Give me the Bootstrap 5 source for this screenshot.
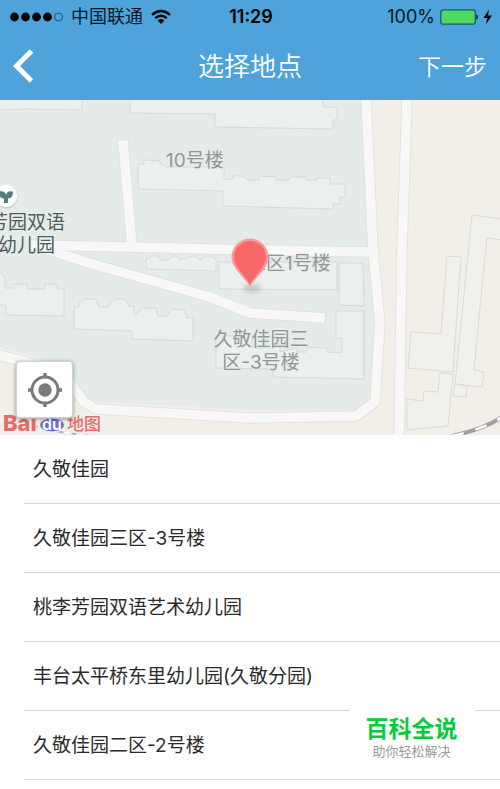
<!DOCTYPE html>
<html lang="zh-CN">
<head>
<meta charset="utf-8">
<meta name="viewport" content="width=device-width, initial-scale=1">
<title>选择地点</title>
<link href="https://cdn.jsdelivr.net/npm/bootstrap@5.3.0/dist/css/bootstrap.min.css" rel="stylesheet">
<style>
body { font-family: Inter, "Noto Sans CJK SC", sans-serif; color: #2b2b2b; background: #fff; }
.topbar { background: #4da3da; }
.status { height: 32px; padding: 1px 8px 0 10px; font-size: 18px; line-height: 31px; color: #0a1a24; }
.status svg { flex: none; }
.clock { font-weight: 600; color: #000; }
.titlebar { height: 68px; padding: 0 13px; }
.titlebar h1 { font-size: 26px; font-weight: 350; line-height: 32px; padding-top: 2px; }
.next-btn { font-size: 23px; font-weight: 350; line-height: 32px; padding-top: 2px; }
.map-view { height: 335px; background: #f1efe8; }
.map-view text { font-size: 19px; }
.map-view .logo-latin { font-size: 22px; }
.map-view .logo-du { font-size: 16px; }
.map-view .logo-han { font-size: 17px; }
.locate { left: 16px; bottom: 17px; width: 57px; height: 57px; background: #fff; border: 1px solid #d2d2d2; border-radius: 4px; box-shadow: 0 1px 4px rgba(0,0,0,.4); }
.places { padding-left: 24px; }
.places .list-group-item { height: 69px; padding: 3px 9px 0; border-color: #d6d6d6; border-width: 0 0 1px; font-size: 19px; color: #2b2b2b; background: transparent; }
.brand-mark { right: 25px; bottom: 12px; width: 125px; height: 72px; padding: 10px 2px 0 0; background: #fff; }
.brand-name { font-size: 23px; line-height: 28px; color: #08cb3c; }
.brand-note { font-size: 13px; line-height: 16px; color: #9a9a9a; }
</style>
<script src="https://cdn.jsdelivr.net/npm/bootstrap@5.3.0/dist/js/bootstrap.bundle.min.js"></script>
</head>
<body>
<div class="min-vh-100 position-relative overflow-hidden">
<header class="topbar">
  <div class="status row g-0 align-items-center flex-nowrap">
    <div class="col d-flex align-items-center">
      <svg width="53" height="10" viewBox="0 0 53 10" aria-hidden="true"><g fill="#000"><circle cx="4.5" cy="5" r="4.4"/><circle cx="15.5" cy="5" r="4.4"/><circle cx="26.5" cy="5" r="4.4"/><circle cx="37.5" cy="5" r="4.4"/></g><circle cx="48.5" cy="5" r="4" fill="none" stroke="#1c3c50" stroke-width=".8"/></svg>
      <span class="ms-2 me-2 text-nowrap">中国联通</span>
      <svg width="20" height="16" viewBox="0 0 20 16" aria-hidden="true"><g fill="none" stroke="#000" stroke-width="2.3"><path d="M1 5.8Q10-1.9 19 5.8"/><path d="M4.2 9.2Q10 4.3 15.8 9.2"/></g><path d="M6.7 11.5Q10 8.7 13.3 11.5L10 15z"/></svg>
    </div>
    <div class="col-auto clock">11:29</div>
    <div class="col d-flex align-items-center justify-content-end">
      <span>100%</span>
      <svg class="ms-1" width="53" height="18" viewBox="0 0 53 18" aria-hidden="true"><rect x="1.8" y="1.8" width="34.5" height="14.4" rx="2.5" fill="#4cd964" stroke="#235572" stroke-width="1.3"/><path d="M37.5 6q2.6 3 0 6z"/><path d="M50 1.5 44.5 10h3.8l-1.6 6.5 6.3-9h-4z"/></svg>
    </div>
  </div>
  <div class="titlebar row g-0 align-items-center flex-nowrap">
    <div class="col">
      <button class="btn p-0 border-0 d-flex" type="button" aria-label="返回"><svg width="22" height="34" viewBox="0 0 22 34"><path d="M18.5 2 3.5 17l15 15" fill="none" stroke="#fff" stroke-width="5"/></svg></button>
    </div>
    <h1 class="col-auto mb-0 text-white">选择地点</h1>
    <div class="col text-end"><button class="btn next-btn px-0 pb-0 border-0 text-white" type="button">下一步</button></div>
  </div>
</header>
<main>
  <section class="map-view position-relative overflow-hidden" aria-label="地图">
    <svg class="d-block w-100 h-100" viewBox="0 100 500 335" preserveAspectRatio="xMidYMid slice" role="img" aria-label="久敬佳园周边地图">
      <defs><filter id="soft" x="-50%" y="-100%" width="200%" height="300%"><feGaussianBlur stdDeviation="2.5"/></filter></defs>
      <path fill="#e4ebe9" d="M0 100H361L370 247 379 322 374 402 355 411 250 410 94 402 84 394 72 374 50 361 0 348z"/>
      <g fill="#ebefee" stroke="#d5dad9" stroke-width="1">
        <path d="M-2 98H82V110L26 109-2 110z"/>
        <path d="M130 98V113L215 114V127L333 129V120H337V107H323V98z"/>
        <path d="M138 164H144V160L160 161V164H163L166 167H224V179H233V176H244L248 180H259V176L276 177V180H289V177H306V180H317V178H330V184H345V197H340V204H333V209L223 206V191L138 189z"/>
        <path d="M146 259 152 256H158L161 260H168L172 256H177L180 260 188 258 192 256H196L200 260 206 256H212L216 259V271L146 269z"/>
        <path d="M219 262H337V290L219 289z"/>
        <path d="M339 263H363L364 306 339 305z"/>
        <path d="M336 311H364V379L273 377V369L216 368V336H252V348H273V345H280V352L297 348V352H307V347L327 348V352L342 353V338H336z"/>
        <path d="M-2 271 5 277V288H14V284H27V289H45V284H57V289H64V316L6 315V305H-2z"/>
        <path d="M74 307H79V303L84 299H96L99 307H108L114 299H125L129 306H134V315L143 308H156L158 316H167L172 309 184 310 187 318H193V341L132 339V331L74 329z"/>
      </g>
      <g fill="#f0f0ed" stroke="#d9d9d5">
        <path d="M447 256 461 257 453 372 408 368 411 332 441 334z"/>
        <path d="M472 215 502 219V240L487 238 484 266 474 370 484 372 482 387 455 384z"/>
        <path d="M455 384 467 386 466 397 453 396z"/>
        <path d="M440 373 453 374 448 426 407 430V399L423 401 424 391 438 392z"/>
      </g>
      <g fill="none" stroke="#e2dfd5" stroke-width="11" stroke-linejoin="round">
        <path d="M123 140 132 247"/><path d="M30 245 130 247 250 250 370 252"/><path d="M40 247 85 262 210 297 250 313 326 318"/>
        <path d="M366 98 373 250 380 322 375 402 356 416 250 418 96 409 84 402 73 387 50 368-2 355"/><path d="M407 98 402 250 399 437"/>
      </g>
      <g fill="none" stroke="#f8f8f8" stroke-width="9.5" stroke-linejoin="round">
        <path d="M123 140.500 132 247"/><path d="M30 245 130 247 250 250 373 252"/><path d="M40 247 85 262 210 297 250 313 325 318"/>
        <path d="M366 98 373 250 380 322 375 402 356 416 250 418 96 409 84 402 73 387 50 368-2 355"/><path d="M407 98 402 250 399 437"/>
      </g>
      <g fill="none"><path d="M452 436Q484 429 502 417" stroke="#a0a0a0" stroke-width="4"/><path d="M452 436Q484 429 502 417" stroke="#fff" stroke-width="2.5" stroke-dasharray="12 12"/><path d="M0 419 60 432 90 436" stroke="#b5b5b5" stroke-width="2"/><path d="M0 419 60 432 90 436" stroke="#fff" stroke-width="2" stroke-dasharray="8 5"/></g>
      <g fill="#8f9896" stroke="#e8edeb" stroke-width="1" paint-order="stroke">
        <text x="166" y="167">10号楼</text><text x="247" y="270">三区1号楼</text>
        <text x="261" y="346" text-anchor="middle">久敬佳园三</text><text x="261" y="369" text-anchor="middle">区-3号楼</text>
      </g>
      <g fill="#4c5c5a" stroke="#eef2f1" stroke-width="1" paint-order="stroke"><text x="65" y="229" text-anchor="end">芳园双语</text><text x="55" y="252" text-anchor="end">幼儿园</text></g>
      <circle cx="6" cy="197" r="11.5" fill="#c9d0ce"/><circle cx="6" cy="196" r="11" fill="#fff"/>
      <path fill="#547f7c" d="M4 203V198.500Q-1 199-1 191.500 5 190 6 195 7 190 13 191.500 13 198.500 8 198.500V203z"/>
      <ellipse cx="252" cy="288" rx="9" ry="4" fill="#68716f" opacity=".3" filter="url(#soft)"/>
      <path fill="#fa9a9a" d="M250 287C246 278 231.500 269 231.500 257A18.500 18.500 0 0 1 268.500 257C268.500 269 254 278 250 287z"/>
      <path fill="#f96869" d="M250 285C246 276 234 267 234 257A16 16 0 0 1 266 257C266 267 254 276 250 285z"/>
      <g font-weight="800">
        <text class="logo-latin" x="3" y="431" fill="#e66c69" stroke="#f8eeea" stroke-width="2" paint-order="stroke">Bai</text>
        <ellipse cx="52" cy="425" rx="12.500" ry="7" fill="#6e6cdb" stroke="#f1effa"/>
        <text class="logo-du" x="52" y="430" text-anchor="middle" fill="#fff" font-weight="600">du</text>
        <text class="logo-han" x="67" y="430" fill="#e66c69" font-weight="500" stroke="#f8eeea" stroke-width="2" paint-order="stroke">地图</text>
      </g>
    </svg>
    <button class="locate btn p-0 position-absolute d-flex align-items-center justify-content-center" type="button" aria-label="定位">
      <svg width="36" height="36" viewBox="0 0 36 36"><circle cx="18" cy="18" r="6.7" fill="#7c7c7c"/><circle cx="18" cy="18" r="13" fill="none" stroke="#7c7c7c" stroke-width="3"/><path d="M18 1v5M18 30v5M1 18h5M30 18h5" stroke="#7c7c7c" stroke-width="3.4"/></svg>
    </button>
  </section>
  <ul class="places list-group list-group-flush mb-0">
    <li class="list-group-item d-flex align-items-center">久敬佳园</li>
    <li class="list-group-item d-flex align-items-center">久敬佳园三区-3号楼</li>
    <li class="list-group-item d-flex align-items-center">桃李芳园双语艺术幼儿园</li>
    <li class="list-group-item d-flex align-items-center">丰台太平桥东里幼儿园(久敬分园)</li>
    <li class="list-group-item border-bottom d-flex align-items-center">久敬佳园二区-2号楼</li>
  </ul>
</main>
<aside class="brand-mark position-absolute text-center">
  <div class="brand-name fw-bold">百科全说</div>
  <div class="brand-note">助你轻松解决</div>
</aside>
</div>
</body>
</html>
